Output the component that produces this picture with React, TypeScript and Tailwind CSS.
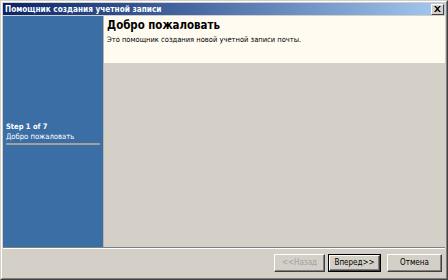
import React from "react";

const font = { fontFamily: "'DejaVu Sans Condensed', 'Liberation Sans', sans-serif" };

function Btn({ children, disabled, def }: { children: React.ReactNode; disabled?: boolean; def?: boolean }) {
  return (
    <div className={`h-[18px] flex bg-[#d4d0c8] ${def ? "border border-black" : ""}`}>
      <div
        className={`flex-1 flex items-center justify-center text-[8px] leading-none border border-t-white border-l-white border-r-[#404040] border-b-[#404040] ${
          disabled ? "text-[#a0a0a0]" : "text-black"
        }`}
        style={{ boxShadow: "inset -1px -1px 0 #808080" }}
      >
        {children}
      </div>
    </div>
  );
}

export default function App() {
  return (
    <div className="w-[448px] h-[280px] bg-[#d4d0c8] flex flex-col overflow-hidden border border-t-[#d4d0c8] border-l-[#d4d0c8] border-r-[#404040] border-b-[#404040]" style={font}>
      <div className="flex flex-col flex-1 border border-t-white border-l-white border-r-[#808080] border-b-[#808080] p-[1px]">
        <div className="h-[12px] flex items-center justify-between pl-[2px] pr-[1px] bg-gradient-to-r from-[#0a246a] to-[#a6caf0]">
          <span className="text-white font-bold text-[8.2px] leading-none">Помощник создания учетной записи</span>
          <div className="w-[13px] h-[11px] bg-[#d4d0c8] border border-t-white border-l-white border-r-[#404040] border-b-[#404040] flex items-center justify-center">
            <svg width="7" height="6" viewBox="0 0 8 7">
              <path d="M0 0h2l2 2 2-2h2l-3 3.5L8 7H6L4 5 2 7H0l3-3.5z" fill="black" />
            </svg>
          </div>
        </div>
        <div className="flex flex-1 min-h-0 mt-[1px]">
          <div className="w-[100px] bg-[#3a6ea5] flex flex-col pt-[106px] px-[3px]">
            <div className="text-white font-bold text-[7.5px] leading-[10px]">Step 1 of 7</div>
            <div className="text-white text-[7.6px] leading-[10px] whitespace-nowrap">Добро пожаловать</div>
            <div className="h-[2px] bg-[#a0a0a0] mt-[1px]"></div>
          </div>
          <div className="w-[1px] bg-[#b8b4ac]"></div>
          <div className="flex-1 flex flex-col">
            <div className="h-[47px] bg-[#fffbf0] px-[3px] pt-[2px]">
              <div className="text-black font-bold text-[11.4px] leading-[14px]">Добро пожаловать</div>
              <div className="text-black text-[7.5px] leading-[10px] mt-[3px]">Это помощник создания новой учетной записи почты.</div>
            </div>
            <div className="flex-1 bg-[#d4d0c8]"></div>
          </div>
        </div>
        <div className="h-[2px] border-t border-t-[#808080] border-b border-b-white"></div>
        <div className="h-[28px] flex items-center justify-end pr-[3px]">
          <div className="w-[51px]"><Btn disabled>&lt;&lt;Назад</Btn></div>
          <div className="w-[53px] ml-[3px]"><Btn def>Вперед&gt;&gt;</Btn></div>
          <div className="w-[55px] ml-[6px]"><Btn>Отмена</Btn></div>
        </div>
      </div>
    </div>
  );
}
